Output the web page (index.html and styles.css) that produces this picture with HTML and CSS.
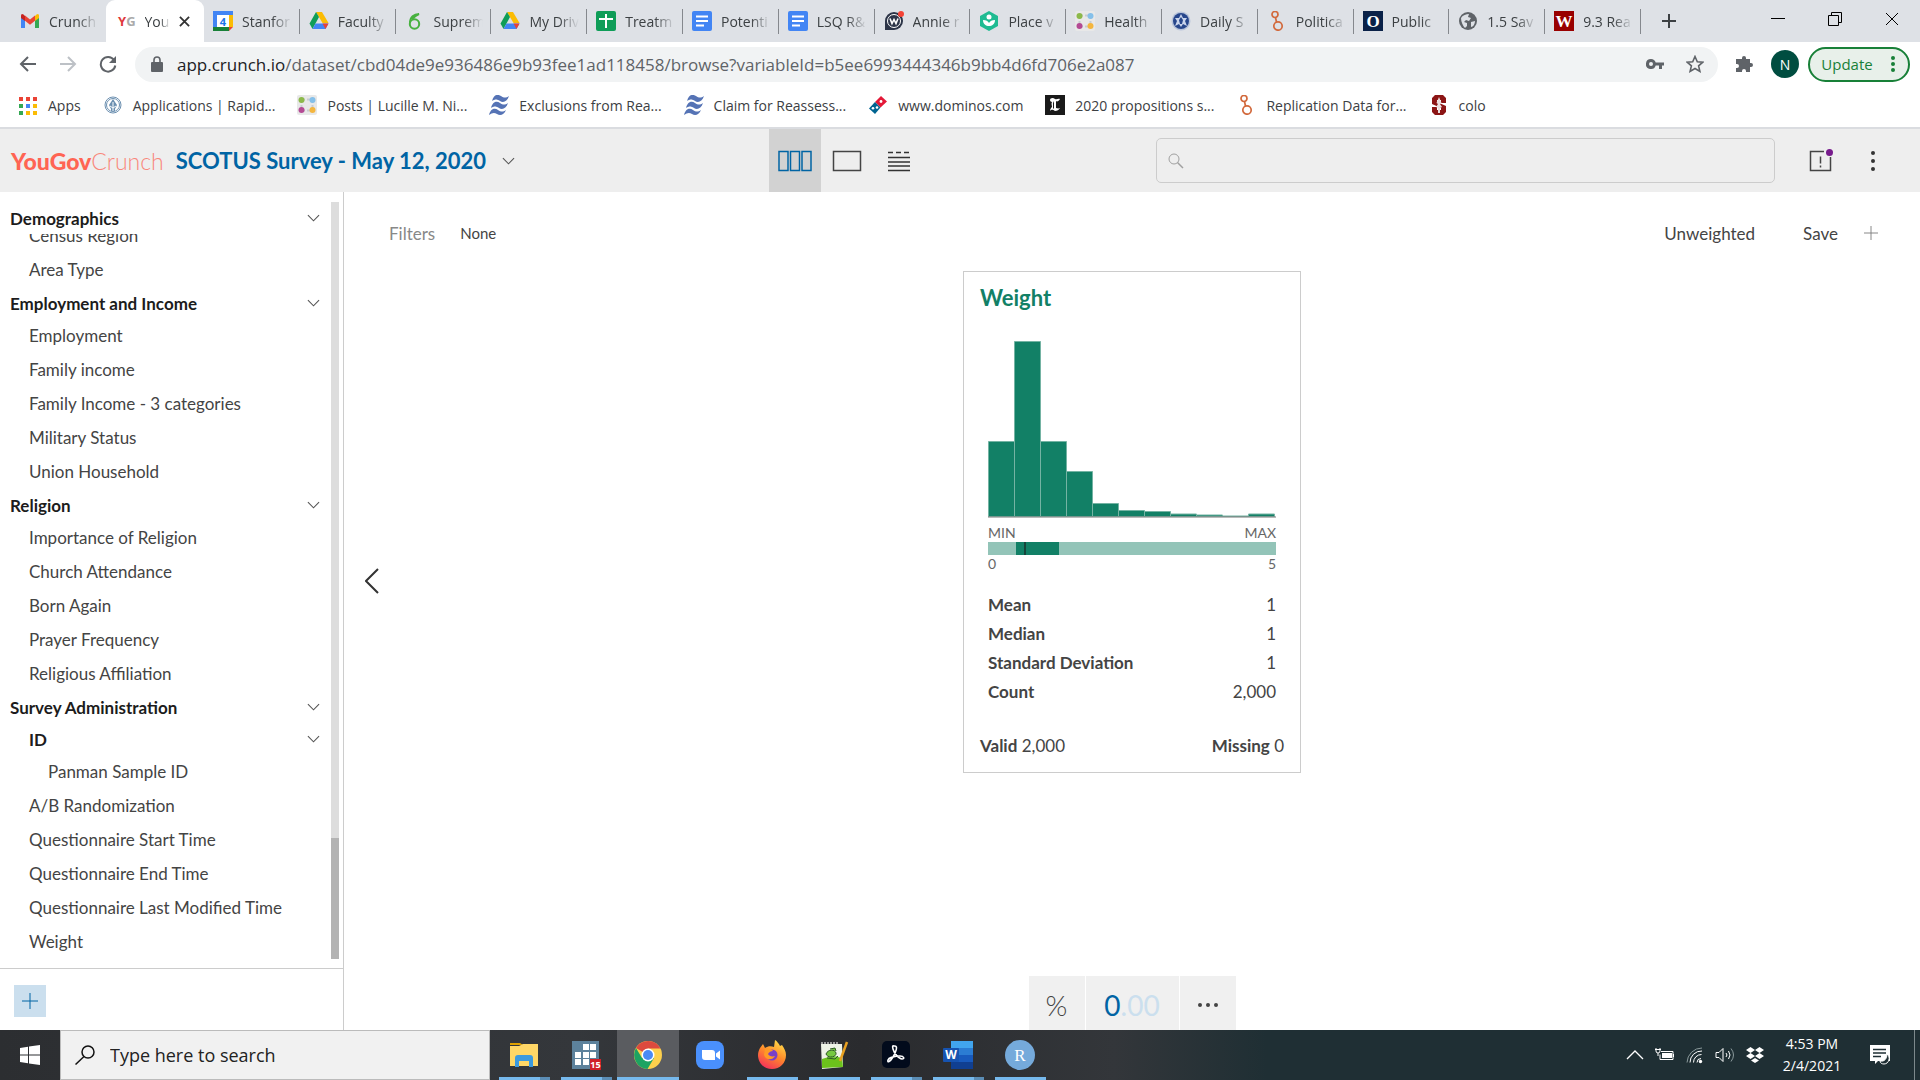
FILE: index.html
```
<!DOCTYPE html>
<html lang="en">
<head>
<meta charset="utf-8">
<title>YouGov Crunch</title>
<link rel="stylesheet" href="styles.css">
</head>
<body>
<svg class="sprite" aria-hidden="true">
  <symbol id="drive" viewBox="0 0 20 20"><path d="M7 1h6l6.500 11h-6z" fill="#fbbc04"/><path d="M7 1l3 5L3.500 18 .5 12.500z" fill="#0f9d58"/><path d="M6.500 12.500h13l-3 5.500h-13z" fill="#4285f4"/><path d="M13.500 12.500h6l-3 5.500z" fill="#ea4335"/></symbol>
  <symbol id="docs" viewBox="0 0 20 20"><rect width="20" height="20" rx="2" fill="#4285f4"/><path d="M4 5.500h12M4 10h12M4 14.500h8" stroke="#fff" stroke-width="2"/></symbol>
  <symbol id="dots4" viewBox="0 0 20 20"><rect width="20" height="20" rx="2" fill="#e8e8e8"/><path d="M4.500 5v10M15.500 5v10M5 4.500h10M5 15.500h10" stroke="#c8ccd0" stroke-width="2" stroke-dasharray="3 2"/><circle cx="4.500" cy="5" r="3" fill="#8cb94a"/><circle cx="15.500" cy="5" r="3" fill="#85c0ea"/><circle cx="4.500" cy="15" r="3" fill="#b44a94"/><circle cx="15.500" cy="15" r="3" fill="#f4b63f"/></symbol>
  <symbol id="dataverse" viewBox="0 0 20 20"><g fill="none" stroke="#d2693c" stroke-width="1.700"><circle cx="8" cy="3.500" r="3"/><circle cx="11" cy="15" r="4.200"/><path d="M8.500 6.500l1 4.500"/></g></symbol>
  <symbol id="waves" viewBox="0 0 20 20"><g fill="#5573b5"><path d="M3 6C5-1 9-1 12 1s5 2 8 0c-2 6-6 7-9 5S6 4 3 6z"/><path d="M2 13C4 6 8 6 11 8s5 2 8 0c-2 6-6 7-9 5s-5-2-8 0z"/><path d="M0 20c2-7 6-7 9-5s5 2 8 0c-2 5-6 6-9 4s-5-1-8 1z"/></g></symbol>
  <symbol id="down" viewBox="0 0 14 8"><path d="M1 1l6 6 6-6" fill="none" stroke="currentColor" stroke-width="1.200"/></symbol>
</svg>

<div class="screen">
<header class="browser">
  <div class="tabstrip">
    <div class="tabs" role="tablist">
      <div class="tab first" role="tab"><svg viewBox="0 0 20 20"><path d="M1 4v13h4V8z" fill="#4285f4"/><path d="M19 4v13h-4V8z" fill="#34a853"/><path d="M15 5l1.500-1.500Q19 2 19 5v2l-4 3z" fill="#fbbc04"/><path d="M5 5L3.500 3.500Q1 2 1 5v2l4 3z" fill="#c5221f"/><path d="M5 4.500L10 8.500l5-4v5.300l-5 4-5-4z" fill="#ea4335"/></svg><span>Crunch</span></div>
      <div class="tab active" role="tab" aria-selected="true"><b class="yg">Y<i>G</i></b><span>You</span><button class="close" aria-label="Close tab"><svg viewBox="0 0 12 12"><path d="M1 1l10 10M11 1L1 11" stroke="#333" stroke-width="2"/></svg></button></div>
      <div class="tab" role="tab"><svg viewBox="0 0 20 20"><path d="M0 0h20v15l-5 5H0z" fill="#4285f4"/><path d="M16 4h4v12h-4z" fill="#fbbc04"/><path d="M0 16h16v4H0z" fill="#188038"/><path d="M16 16h4l-4 4z" fill="#ea4335"/><path d="M4 4h12v12H4z" fill="#fff"/><text x="10" y="14.500" text-anchor="middle" class="cal">4</text></svg><span>Stanfor</span></div>
      <div class="tab" role="tab"><svg><use href="#drive"/></svg><span>Faculty</span></div>
      <div class="tab" role="tab"><svg viewBox="0 0 20 20"><g fill="none" stroke="#47b13f" stroke-width="2"><circle cx="9.500" cy="13" r="4.700"/><path d="M5 12C5 6 9 3 14 3c-3 1-4 2-7 5"/></g></svg><span>Suprem</span></div>
      <div class="tab" role="tab"><svg><use href="#drive"/></svg><span>My Driv</span></div>
      <div class="tab" role="tab"><svg viewBox="0 0 20 20"><rect width="20" height="20" rx="2" fill="#0f9d58"/><path d="M10 3v14M3 8h14" stroke="#fff" stroke-width="2"/></svg><span>Treatm</span></div>
      <div class="tab" role="tab"><svg><use href="#docs"/></svg><span>Potenti</span></div>
      <div class="tab" role="tab"><svg><use href="#docs"/></svg><span>LSQ R&amp;</span></div>
      <div class="tab" role="tab"><svg viewBox="0 0 20 20"><path d="M10 1a9 9 0 1 1 0 18H1v-9a9 9 0 0 1 9-9z" fill="#2d3548"/><circle cx="10" cy="10" r="6.500" fill="none" stroke="#fff"/><path d="M6 7.500l2 5 2-4 2 4 2-5" fill="none" stroke="#fff" stroke-width="1.600"/><circle cx="17" cy="3" r="3" fill="#f44336"/></svg><span>Annie r</span></div>
      <div class="tab" role="tab"><svg viewBox="0 0 20 20"><path d="M10 0l9 5v10l-9 5-9-5V5z" fill="#1fbb92"/><path d="M4 9c3 0 5 1 6 3 1-2 3-3 6-3 0 4-3 6-6 6s-6-2-6-6z" fill="#fff"/><circle cx="10" cy="6" r="2.500" fill="#fff"/></svg><span>Place v</span></div>
      <div class="tab" role="tab"><svg><use href="#dots4"/></svg><span>Health</span></div>
      <div class="tab" role="tab"><svg viewBox="0 0 20 20"><circle cx="10" cy="10" r="9.500" fill="#b9c4da"/><circle cx="10" cy="10" r="8" fill="#27468c"/><path d="M10 3l2 4h4l-2 3 2 5-4-2-2 3-2-3-4 2 2-5-2-3h4z" fill="#c9d4ec"/><path d="M10 6l2 3-1 4H9L8 9z" fill="#27468c"/></svg><span>Daily S</span></div>
      <div class="tab" role="tab"><svg><use href="#dataverse"/></svg><span>Politica</span></div>
      <div class="tab" role="tab"><svg viewBox="0 0 20 20"><path d="M0 0h20v20H0z" fill="#0a2148"/><text x="10" y="16" text-anchor="middle" class="serif">O</text></svg><span>Public</span></div>
      <div class="tab" role="tab"><svg viewBox="0 0 20 20"><circle cx="10" cy="10" r="9" fill="#5f6368"/><path d="M3 7c2-3 5-4 8-4l-1 3 3 1-2 3-3-1-2 2 3 1v3l-2 2C5 15 3 11 3 7zm10 4l4-1c0 3-2 6-4 6z" fill="#dee1e6"/></svg><span>1.5 Sav</span></div>
      <div class="tab" role="tab"><svg viewBox="0 0 20 20"><path d="M0 0h20v20H0z" fill="#990000"/><text x="10" y="16" text-anchor="middle" class="serif">W</text></svg><span>9.3 Rea</span></div>
    </div>
    <button class="newtab" aria-label="New tab"><svg viewBox="0 0 16 16"><path d="M8 1v14M1 8h14" stroke="#3c4043" stroke-width="2"/></svg></button>
    <div class="winbtns">
      <button aria-label="Minimize"><svg viewBox="0 0 14 14"><path d="M0 6.500h14" stroke="#000"/></svg></button>
      <button aria-label="Restore"><svg viewBox="0 0 14 14"><path d="M.5 3.500h10v10H.5zM3.500 3V.5h10v10H11" fill="none" stroke="#000"/></svg></button>
      <button aria-label="Close"><svg viewBox="0 0 14 14"><path d="M1 1l12 12M13 1L1 13" stroke="#000"/></svg></button>
    </div>
  </div>
  <div class="toolbar">
    <button aria-label="Back"><svg viewBox="0 0 18 18"><path d="M17 9H2M9 2L2 9l7 7" fill="none" stroke="#5f6368" stroke-width="2"/></svg></button>
    <button aria-label="Forward"><svg viewBox="0 0 18 18"><path d="M1 9h15M9 2l7 7-7 7" fill="none" stroke="#bdc1c6" stroke-width="2"/></svg></button>
    <button aria-label="Reload"><svg viewBox="0 0 18 18"><path d="M15 5a7.300 7.300 0 1 0 1.300 5.500" fill="none" stroke="#5f6368" stroke-width="2"/><path d="M17 1v7h-7z" fill="#5f6368"/></svg></button>
    <div class="address">
      <svg class="lock" viewBox="0 0 12 16"><rect y="6" width="12" height="10" rx="1" fill="#5f6368"/><path d="M3 7V4a3 3 0 0 1 6 0v3" fill="none" stroke="#5f6368" stroke-width="1.600"/></svg>
      <p class="url"><span>app.crunch.io</span>/dataset/cbd04de9e936486e9b93fee1ad118458/browse?variableId=b5ee6993444346b9bb4d6fd706e2a087</p>
      <button aria-label="Saved passwords"><svg viewBox="0 0 18 18"><path d="M5 4a5 5 0 1 0 4.700 6.500H13V14h3v-3.500h2v-3H9.700A5 5 0 0 0 5 4zm0 3a2 2 0 1 1 0 4 2 2 0 0 1 0-4z" fill="#5f6368"/></svg></button>
      <button aria-label="Bookmark"><svg viewBox="0 0 18 18"><path d="M9 1.500l2.300 5.200 5.500.5-4.200 3.700 1.300 5.500L9 13.500l-4.900 2.900 1.300-5.500L1.200 7.200l5.500-.5z" fill="none" stroke="#5f6368" stroke-width="1.600"/></svg></button>
    </div>
    <button aria-label="Extensions"><svg viewBox="0 0 18 18"><path d="M7 3a2 2 0 0 1 4 0v1h4v4h1a2 2 0 0 1 0 4h-1v5h-4v-1a2 2 0 0 0-4 0v1H1v-4h1a2 2 0 0 0 0-4H1V4h6z" fill="#5f6368"/></svg></button>
    <button class="profile" aria-label="Profile">N</button>
    <button class="update">Update<svg viewBox="0 0 4 16"><g fill="#188038"><circle cx="2" cy="2" r="2"/><circle cx="2" cy="8" r="2"/><circle cx="2" cy="14" r="2"/></g></svg></button>
  </div>
  <nav class="bookmarks">
    <a href="#"><svg viewBox="0 0 20 20"><g stroke-width="4" stroke-dasharray="4 3"><path d="M1 4h18" stroke="#ea4335"/><path d="M1 11h4" stroke="#34a853"/><path d="M8 11h4" stroke="#4285f4"/><path d="M15 11h4" stroke="#fbbc04"/><path d="M1 18h4" stroke="#34a853"/><path d="M8 18h11" stroke="#fbbc04"/></g></svg>Apps</a>
    <a href="#"><svg viewBox="0 0 20 20"><g fill="none" stroke="#6b8fb0"><circle cx="10" cy="10" r="8"/><circle cx="10" cy="10" r="6.500"/></g><path d="M10 4l4 6-2 4v2H8v-2l-2-4z" fill="#6b8fb0"/><path d="M10 7v9M7 11l3 2 3-2" stroke="#fff" fill="none"/></svg>Applications | Rapid...</a>
    <a href="#"><svg><use href="#dots4"/></svg>Posts | Lucille M. Ni...</a>
    <a href="#"><svg><use href="#waves"/></svg>Exclusions from Rea...</a>
    <a href="#"><svg><use href="#waves"/></svg>Claim for Reassess...</a>
    <a href="#"><svg viewBox="0 0 20 20"><path d="M13 1l6 5.500-6.500 6L7 7z" fill="#e31837"/><path d="M7 7l5.500 5.500L7 19l-6-5.500z" fill="#006491"/><g fill="#fff"><circle cx="13" cy="6.500" r="1.400"/><circle cx="5" cy="13.300" r="1.300"/><circle cx="9" cy="12.500" r="1.300"/></g></svg>www.dominos.com</a>
    <a href="#"><svg viewBox="0 0 20 20"><path d="M0 0h20v20H0z" fill="#1a1a1a"/><path d="M15 4c-2-1-3 1-5 0-2-2-5-1-5 1 0 1 1 2 2 2-1 2 0 3 0 5-1 1-2 2-2 4 2-2 3-1 5 0 2 0 4-1 5-3-2 1-3 0-4 0V6c1 1 3 0 4-2zM9 6v7l-1 1V8z" fill="#fff"/></svg>2020 propositions s...</a>
    <a href="#"><svg><use href="#dataverse"/></svg>Replication Data for...</a>
    <a href="#"><svg viewBox="0 0 20 20"><path d="M6 0h8l3 3v5h-5V5H8v2l9 4v6l-3 3H6l-3-3v-5h5v3h4v-2L3 9V3z" fill="#8c1515"/><path d="M10 2l2.500 6-1.500 1 2 3-2 1v5H9v-5l-2-1 2-3-1.500-1z" fill="#e9dede"/></svg>colo</a>
  </nav>
</header>

<header class="appbar">
  <div class="brand"><a class="logo" href="#"><b>YouGov</b>Crunch</a><h1>SCOTUS Survey - May 12, 2020</h1><svg class="chev"><use href="#down"/></svg></div>
  <div class="views">
    <button class="on" aria-label="Cards view"><svg viewBox="0 0 34 24"><path d="M1 2.500h9v19H1zM12.500 2.500h9v19h-9zM24 2.500h9v19h-9z" fill="none" stroke="#0064a4" stroke-width="1.500"/></svg></button>
    <button aria-label="Single view"><svg viewBox="0 0 34 24"><path d="M3.500 2.500h27v19h-27z" fill="none" stroke="#444" stroke-width="1.500"/></svg></button>
    <button aria-label="List view"><svg viewBox="0 0 34 24"><path d="M6 8.500h22M6 13h22M6 17h22M6 21.500h22" stroke="#333" stroke-width="1.300"/><path d="M6 3.500h22" stroke="#333" stroke-width="1.300" stroke-dasharray="5 3"/></svg></button>
  </div>
  <label class="search"><svg viewBox="0 0 16 16"><circle cx="6" cy="6" r="5" fill="none" stroke="#a0a0a0"/><path d="M9.500 9.500L15 15" stroke="#a0a0a0" stroke-width="1.500"/></svg><input type="search" aria-label="Search"></label>
  <div class="tools">
    <button aria-label="Notifications"><svg viewBox="0 0 24 24"><path d="M15 2.500H1.500v19h20V8" fill="none" stroke="#444" stroke-width="1.500"/><path d="M11.500 7.500v7M11.500 16.500v2" stroke="#444" stroke-width="1.500"/><circle cx="20.500" cy="3.500" r="3.500" fill="#771b8c"/></svg></button>
    <button aria-label="More"><svg viewBox="0 0 24 24"><g fill="#333"><circle cx="12" cy="4" r="2"/><circle cx="12" cy="12" r="2"/><circle cx="12" cy="20" r="2"/></g></svg></button>
  </div>
</header>

<div class="work">
  <aside class="sidebar">
    <div class="tree">
      <div class="col">
        <button class="group pinned">Demographics<svg class="chev"><use href="#down"/></svg></button>
        <div class="scroll">
          <ul>
            <li><a href="#">Census Region</a></li>
            <li><a href="#">Area Type</a></li>
            <li><button class="group">Employment and Income<svg class="chev"><use href="#down"/></svg></button>
              <ul>
                <li><a href="#">Employment</a></li>
                <li><a href="#">Family income</a></li>
                <li><a href="#">Family Income - 3 categories</a></li>
                <li><a href="#">Military Status</a></li>
                <li><a href="#">Union Household</a></li>
              </ul></li>
            <li><button class="group">Religion<svg class="chev"><use href="#down"/></svg></button>
              <ul>
                <li><a href="#">Importance of Religion</a></li>
                <li><a href="#">Church Attendance</a></li>
                <li><a href="#">Born Again</a></li>
                <li><a href="#">Prayer Frequency</a></li>
                <li><a href="#">Religious Affiliation</a></li>
              </ul></li>
            <li><button class="group">Survey Administration<svg class="chev"><use href="#down"/></svg></button>
              <ul>
                <li><button class="group sub">ID<svg class="chev"><use href="#down"/></svg></button>
                  <ul><li><a class="deep" href="#">Panman Sample ID</a></li></ul></li>
                <li><a href="#">A/B Randomization</a></li>
                <li><a href="#">Questionnaire Start Time</a></li>
                <li><a href="#">Questionnaire End Time</a></li>
                <li><a href="#">Questionnaire Last Modified Time</a></li>
                <li><a href="#">Weight</a></li>
              </ul></li>
          </ul>
        </div>
      </div>
      <div class="track"><div class="thumb"></div></div>
    </div>
    <div class="addbar"><button class="add" aria-label="Add"><svg viewBox="0 0 16 16"><path d="M8 0v16M0 8h16" stroke="#0064a4"/></svg></button></div>
  </aside>

  <main class="main">
    <div class="filters"><span class="dim">Filters</span><button class="none">None</button><button class="weighting">Unweighted</button><button class="save">Save</button><button class="plus" aria-label="New"><svg viewBox="0 0 16 16"><path d="M8 0v16M0 8h16" stroke="#777"/></svg></button></div>
    <div class="stage">
      <button class="prev" aria-label="Previous"><svg viewBox="0 0 14 26"><path d="M13 1L1 13l12 12" fill="none" stroke="#333" stroke-width="2"/></svg></button>
      <section class="card">
        <h2>Weight</h2>
        <div class="chart">
          <svg class="hist" viewBox="0 0 288 178" preserveAspectRatio="none"><g fill="#128066" stroke="#74b3a3"><path d="M.5 101.500h26v75H.5z"/><path d="M26.500 1.500h26v175h-26z"/><path d="M52.500 101.500h26v75h-26z"/><path d="M78.500 131.500h26v45h-26z"/><path d="M104.500 163.500h26v13h-26z"/><path d="M130.500 170.500h26v6h-26z"/><path d="M156.500 171.500h26v5h-26z"/><path d="M182.500 174h26v2.500h-26z"/><path d="M208.500 175h26v1.500h-26z"/><path d="M234.500 176h26v.5h-26z"/><path d="M260.500 174h26v2.500h-26z"/></g><path d="M0 177h288" stroke="#777"/></svg>
          <div class="ends"><span>MIN</span><span>MAX</span></div>
          <svg class="range" viewBox="0 0 288 13" preserveAspectRatio="none"><path d="M0 0h288v13H0z" fill="#93c4b8"/><path d="M28 0h43v13H28z" fill="#128066"/><path d="M37 0v13" stroke="#17453b" stroke-width="2"/></svg>
          <div class="ends"><span>0</span><span>5</span></div>
          <table>
            <tr><th>Mean</th><td>1</td></tr>
            <tr><th>Median</th><td>1</td></tr>
            <tr><th>Standard Deviation</th><td>1</td></tr>
            <tr><th>Count</th><td>2,000</td></tr>
          </table>
        </div>
        <div class="totals"><span><b>Valid</b> 2,000</span><span><b>Missing</b> 0</span></div>
      </section>
    </div>
    <div class="format"><button class="pct">%</button><button class="dec">0<span>.00</span></button><button class="more" aria-label="More options"><svg viewBox="0 0 22 6"><g fill="#444"><circle cx="3" cy="3" r="2"/><circle cx="11" cy="3" r="2"/><circle cx="19" cy="3" r="2"/></g></svg></button></div>
  </main>
</div>

<footer class="taskbar">
  <button class="start" aria-label="Start"><svg viewBox="0 0 20 20"><path d="M0 3l8-1.200v7.700H0zM9 1.600L20 0v9.500H9zM0 10.500h8v7.700L0 17zM9 10.500h11V20L9 18.400z" fill="#fff"/></svg></button>
  <label class="tasksearch"><svg viewBox="0 0 20 20"><circle cx="13" cy="7" r="6" fill="none" stroke="#111" stroke-width="1.500"/><path d="M9 11.500L.5 19.500" stroke="#111" stroke-width="1.500"/></svg><input type="text" placeholder="Type here to search" aria-label="Type here to search"></label>
  <div class="apps">
    <button class="run multi" aria-label="File Explorer"><svg viewBox="0 0 30 30"><path d="M1 3h10l3 2H1z" fill="#dea000"/><path d="M1 6h9l4-2h15v22H1z" fill="#ffd766"/><path d="M6 26V18q0-3 3-3h12q3 0 3 3v9h-4v-6h-10v6H6z" fill="#3c9ade"/></svg></button>
    <button class="run multi" aria-label="Calendar"><svg viewBox="0 0 30 30"><path d="M1 1h27v28H1z" fill="#5d829c"/><path d="M12 4h6v6h-6zM19 4h6v6h-6zM4 12h6v6H4zM12 12h6v6h-6zM19 12h6v6h-6zM4 19h6v6H4zM12 19h6v6h-6z" fill="#fff"/><path d="M19 19h11v11H19z" fill="#d01f28"/><text x="24.500" y="28" text-anchor="middle" class="badge">15</text></svg></button>
    <button class="run current" aria-label="Chrome"><svg viewBox="0 0 30 30"><circle cx="15" cy="15" r="14" fill="#fdd04d"/><path d="M15 15L3 8a14 14 0 0 1 24.500 0.500H15z" fill="#dc4a3e"/><path d="M3 8a14 14 0 0 0 11.500 21l6.500-11-6-3-6 3z" fill="#1da362"/><circle cx="15" cy="15" r="6.500" fill="#fff"/><circle cx="15" cy="15" r="5" fill="#4a8af4"/></svg></button>
    <button aria-label="Zoom"><svg viewBox="0 0 30 30"><rect x="1" y="1" width="28" height="28" rx="8" fill="#4a90fc"/><path d="M7 10h10q3 0 3 3v7H10q-3 0-3-3zM21 13.500l4-3v9l-4-3z" fill="#fff"/></svg></button>
    <button class="run" aria-label="Firefox"><svg viewBox="0 0 30 30"><defs><linearGradient id="ff" x1=".8" y1="0" x2=".3" y2="1"><stop offset="0" stop-color="#ffe14a"/><stop offset=".5" stop-color="#ff8a2a"/><stop offset="1" stop-color="#f5315b"/></linearGradient></defs><path d="M3 8l3-4 2 4c3-2 6-2 9-1l1-7c2 1 4 4 5 6l2-1c2 3 4 6 4 10 0 8-6 14-14 14S1 23 1 15c0-3 1-5 2-7z" fill="url(#ff)"/><circle cx="15" cy="15" r="5.500" fill="#7a3fc8"/><path d="M8 9c3-1 7 0 8 2-2 0-4 1-5 3 1 2 4 3 7 2-2 4-9 5-11-1z" fill="#ff9a25"/></svg></button>
    <button class="run" aria-label="Notepad++"><svg viewBox="0 0 30 30"><path d="M2 4h21l1 23-21 2z" fill="#eef3e6"/><path d="M3 19q10-4 20-1l1 9-21 1z" fill="#6cc21c"/><path d="M2 3h18" stroke="#999" stroke-width="2" stroke-dasharray="2 1"/><path d="M7 14c2-5 9-5 10-1s-8 6-10 1zm1 4l8 1 3-3M11 9l5-1 1 3" fill="#76c840" stroke="#2d5a22"/><path d="M28 2l-7 19" stroke="#e8a020" stroke-width="2.500"/></svg></button>
    <button class="run multi" aria-label="Acrobat"><svg viewBox="0 0 30 30"><rect x="1" y="1" width="28" height="27" rx="5" fill="#020b1c"/><path d="M14 6c3 0 1 6-2 11s-6 6-5 3 8-4 12-4 5 3 2 3-8-6-9-10 0-3 2-3z" fill="none" stroke="#fff" stroke-width="1.600"/></svg></button>
    <button class="run multi" aria-label="Word"><svg viewBox="0 0 30 30"><path d="M8 1h22v7H8z" fill="#41a5ee"/><path d="M8 8h22v7H8z" fill="#2b7cd3"/><path d="M8 15h22v7H8z" fill="#185abd"/><path d="M8 22h22v7H8z" fill="#103f91"/><rect x="0" y="8" width="16" height="14" rx="1" fill="#1653b0"/><text x="8" y="19" text-anchor="middle" class="word">W</text></svg></button>
    <button class="run" aria-label="RStudio"><svg viewBox="0 0 30 30"><circle cx="15" cy="15" r="15" fill="#75aadb"/><text x="15" y="21" text-anchor="middle" class="rr">R</text></svg></button>
  </div>
  <div class="tray">
    <svg viewBox="0 0 20 20"><path d="M2 14l8-8 8 8" fill="none" stroke="#fff" stroke-width="1.300"/></svg>
    <svg viewBox="0 0 20 20"><path d="M6 6.500h12v8H5v-5" fill="none" stroke="#fff"/><path d="M7 8h10v5H7z" fill="#fff"/><path d="M18.500 9v3M1 3v3q0 2 2 2t2-2V3M0 4.500h6M3 8v3" stroke="#fff" fill="none"/></svg>
    <svg viewBox="0 0 20 20"><g fill="none" stroke="#fff"><path d="M12 17.500a4 4 0 0 1 4-4M8.500 17.500A8 8 0 0 1 16.500 9.500M5 17.500A11.500 11.500 0 0 1 17 6"/><path d="M2 17.500A15 15 0 0 1 17 3" stroke="#8b9a9c"/></g><circle cx="15.500" cy="16.500" r="1.700" fill="#fff"/></svg>
    <svg viewBox="0 0 20 20"><path d="M1 7.500h3l4-4v13l-4-4H1zM11 8q2 2 0 4M13.500 6q3 4 0 8" fill="none" stroke="#fff"/><path d="M16 3.500q5 6.500 0 13" fill="none" stroke="#8b9a9c"/></svg>
    <svg viewBox="0 0 20 20"><path d="M5.500 2L10 5l-4.500 3L1 5zM14.500 2L19 5l-4.500 3L10 5zM5.500 8l4.500 3-4.500 3L1 11zM14.500 8l4.500 3-4.500 3L10 11zM10 13l4 2.500-4 2.500-4-2.500z" fill="#fff"/></svg>
  </div>
  <div class="clock"><span>4:53 PM</span><span>2/4/2021</span></div>
  <button class="action" aria-label="Notifications"><svg viewBox="0 0 22 22"><path d="M1 1h20v16H9l-3 3v-3H1z" fill="#fff"/><path d="M4 5.500h13M4 9h13M4 12.500h8" stroke="#1f2f34" stroke-width="1.300"/><path d="M18 10c4 3 2 10-3 10-2 0-4-1-4-3 4 1 7-2 7-7z" fill="#1f2f34" stroke="#fff"/></svg></button>
</footer>
</div>
</body>
</html>
```
FILE: styles.css
```
* { box-sizing: border-box; }
body { margin: 0; font-family: "Open Sans", "Noto Sans", sans-serif; color: #3c4043; background: #fff; }
button { border: 0; padding: 0; margin: 0; background: none; font: inherit; color: inherit; display: flex; align-items: center; justify-content: center; }
a { color: inherit; text-decoration: none; }
h1, h2, p, ul { margin: 0; padding: 0; }
ul { list-style: none; }
svg { display: block; flex: none; }
.sprite { position: absolute; width: 0; height: 0; }
.screen { height: 100vh; display: flex; flex-direction: column; overflow: hidden; }

/* Browser window */
.browser { flex: none; border-bottom: 2px solid #dadce0; }
.tabstrip { display: flex; height: 42px; background: #dee1e6; }
.tabs { flex: 1; display: flex; min-width: 0; }
.tab { flex: 1; min-width: 0; display: flex; align-items: center; gap: 9px; padding: 0 8px 0 9px; font-size: 14px; position: relative; }
.tab svg { width: 20px; height: 20px; }
.tab span { flex: 1; min-width: 0; overflow: hidden; white-space: nowrap; mask-image: linear-gradient(90deg, #000 60%, transparent); }
.tab::after { content: ""; position: absolute; right: 0; top: 9px; width: 1px; height: 25px; background: #85888d; }
.tab.first { flex: 0 0 106px; padding-left: 20px; }
.tab.first::after, .tab.active::after { display: none; }
.tab.active { flex: 0 0 98px; background: #fff; border-radius: 9px 9px 0 0; padding: 0 14px 0 12px; }
.yg { font-size: 13px; color: #e0383c; }
.yg i { font-style: normal; color: #aaa; }
.tab .close svg { width: 11px; height: 11px; }
.newtab { width: 56px; }
.newtab svg { width: 16px; }
.winbtns { display: flex; width: 223px; padding-left: 52px; }
.winbtns button { flex: 1; height: 37px; }
.winbtns svg { width: 14px; }
.toolbar { display: flex; align-items: center; height: 44px; padding: 0 10px 0 8px; }
.toolbar > button { width: 40px; height: 34px; }
.toolbar > button svg { width: 18px; }
.address { flex: 1; min-width: 0; display: flex; align-items: center; gap: 22px; height: 35px; margin: 0 6px 0 7px; padding: 0 14px 0 16px; border-radius: 18px; background: #f1f3f4; }
.address button svg { width: 18px; }
.address .lock { width: 12px; height: 16px; margin-right: -8px; }
.url { flex: 1; font-size: 17px; color: #5f6368; white-space: nowrap; overflow: hidden; }
.url span { color: #202124; }
.toolbar .profile { width: 28px; height: 28px; margin: 0 9px 0 7px; border-radius: 50%; background: #004d40; color: #fff; font-size: 14px; }
.toolbar .update { width: 102px; height: 35px; padding-right: 2px; gap: 18px; border: 2px solid #188038; border-radius: 18px; background: #e8f0ea; color: #188038; font-size: 15px; }
.toolbar .update svg { width: 4px; }
.bookmarks { display: flex; align-items: center; gap: 22px; height: 41px; padding: 0 18px 3px; font-size: 14px; white-space: nowrap; }
.bookmarks a { display: flex; align-items: center; gap: 10px; }
.bookmarks svg { width: 20px; height: 20px; }

/* Application header */
.appbar { flex: none; display: grid; grid-template-columns: 40% 1fr 619px 145px; align-items: center; height: 63px; background: #eee; font-family: Lato, sans-serif; }
.brand { display: flex; align-items: center; gap: 12px; padding-left: 11px; }
.logo { font-size: 23px; color: #f9877b; font-weight: 300; }
.logo b { color: #ff6453; font-weight: 900; }
h1 { font-size: 22px; font-weight: 700; color: #0064a4; white-space: nowrap; }
.chev { width: 13px; height: 8px; color: #555; }
.brand .chev { margin-left: 4px; }
.views { display: flex; align-self: stretch; padding-left: 1px; }
.views button { width: 52px; }
.views .on { background: #d2d2d2; }
.views svg { width: 34px; }
.search { display: flex; align-items: center; gap: 8px; height: 45px; padding: 0 11px; border: 1px solid #ccc; border-radius: 5px; }
.search svg { width: 16px; }
.search input { flex: 1; min-width: 0; border: 0; outline: 0; background: none; font: inherit; }
.tools { display: flex; align-items: center; padding-left: 34px; gap: 28px; }
.tools svg { width: 24px; }

/* Variable tree */
.work { flex: 1; min-height: 0; display: flex; font-family: Lato, sans-serif; font-size: 17px; color: #444; }
.sidebar { flex: none; width: 344px; display: flex; flex-direction: column; border-right: 1px solid #ccc; }
.tree { flex: 1; min-height: 0; display: flex; gap: 11px; padding: 10px 4px 9px 10px; }
.col { flex: 1; min-width: 0; display: flex; flex-direction: column; }
.group { width: 100%; height: 32px; justify-content: space-between; font-weight: 700; color: #1c1c1c; }
.group.sub { padding-left: 19px; }
.pinned { flex: none; }
.scroll { flex: 1; min-height: 0; overflow: hidden; display: flex; flex-direction: column; justify-content: flex-end; }
.scroll a { display: block; height: 34px; line-height: 34px; padding-left: 19px; white-space: nowrap; }
.scroll .deep { padding-left: 38px; }
.track { width: 8px; background: #ddd; display: flex; flex-direction: column; justify-content: flex-end; }
.thumb { height: 16%; background: #b3b3b3; }
.addbar { flex: none; height: 62px; padding: 16px 14px; border-top: 1px solid #ccc; }
.add { width: 32px; height: 32px; background: #cbdfee; }
.add svg { width: 16px; }

/* Main panel */
.main { flex: 1; min-width: 0; display: flex; flex-direction: column; }
.filters { flex: none; display: flex; align-items: center; height: 79px; padding: 3px 42px 0 45px; }
.dim { color: #888; }
.none { margin-left: 25px; margin-right: auto; font-size: 15px; }
.save { margin: 0 26px 0 48px; }
.plus svg { width: 14px; }
.stage { flex: 1; position: relative; display: flex; justify-content: center; align-items: flex-start; }
.prev { position: absolute; left: 21px; top: 297px; }
.prev svg { width: 14px; }
.card { width: 338px; padding: 10px 16px 12px; border: 1px solid #ccc; }
h2 { font-size: 22px; line-height: 32px; font-weight: 700; color: #128066; }
.chart { padding: 26px 8px 0; }
.hist { width: 100%; height: 178px; }
.ends { display: flex; justify-content: space-between; font-size: 14px; line-height: 18px; color: #666; }
.hist + .ends { padding-top: 6px; }
.range { width: 100%; height: 13px; }
table { width: 100%; margin-top: 17px; border-collapse: collapse; line-height: 29px; }
th { text-align: left; padding: 0; }
td { text-align: right; padding: 0; }
.totals { display: flex; justify-content: space-between; margin-top: 26px; line-height: 28px; }
.format { align-self: center; display: flex; gap: 1px; height: 54px; }
.format button { background: #f0f0f0; width: 56px; padding-top: 4px; font-size: 28px; font-weight: 300; }
.format .dec { width: 93px; color: #0064a4; font-weight: 400; }
.dec span { color: #cbdfee; }
.format svg { width: 22px; }

/* Taskbar */
.taskbar { flex: none; display: flex; height: 50px; background: linear-gradient(90deg, #2c2e31, #34373b 30%, #2a2b2e 45%, #33363a 58%, #1f2f34 66%, #1f2f34); color: #fff; }
.start { width: 60px; }
.start svg { width: 20px; }
.tasksearch { display: flex; align-items: center; gap: 15px; width: 430px; padding: 0 14px; border: 1px solid #bbb; background: #f1f1f1; }
.tasksearch svg { width: 20px; }
.tasksearch input { flex: 1; min-width: 0; border: 0; outline: 0; padding: 0; background: none; font: inherit; font-size: 18px; color: #222; }
.tasksearch input::placeholder { color: #222; opacity: 1; }
.apps { display: flex; flex: 1; padding-left: 3px; }
.apps button { width: 62px; position: relative; }
.apps svg { width: 30px; }
.run::after { content: ""; position: absolute; left: 6px; right: 5px; bottom: 0; height: 3px; background: #76b9ed; }
.multi::after { background: linear-gradient(90deg, #76b9ed 41px, #5b8db5 41px); }
.current { background: #5a5c60; }
.current::after { left: 0; right: 0; }
.tray { display: flex; align-items: center; gap: 10px; }
.tray svg { width: 20px; }
.clock { display: flex; flex-direction: column; justify-content: center; width: 94px; font-size: 14px; line-height: 22px; text-align: center; }
.action { width: 41px; }
.action svg { width: 22px; }
.taskbar::after { content: ""; width: 1px; margin: 0 5px 0 14px; background: #7c888b; }
.cal { font: 700 11px "Open Sans", sans-serif; fill: #1a73e8; }
.serif { font: 700 17px "Liberation Serif", serif; fill: #fff; }
.badge { font: 700 9px "Open Sans", sans-serif; fill: #fff; }
.word { font: 700 12px "Open Sans", sans-serif; fill: #fff; }
.rr { font: 17px "Liberation Serif", serif; fill: #fff; }
```
